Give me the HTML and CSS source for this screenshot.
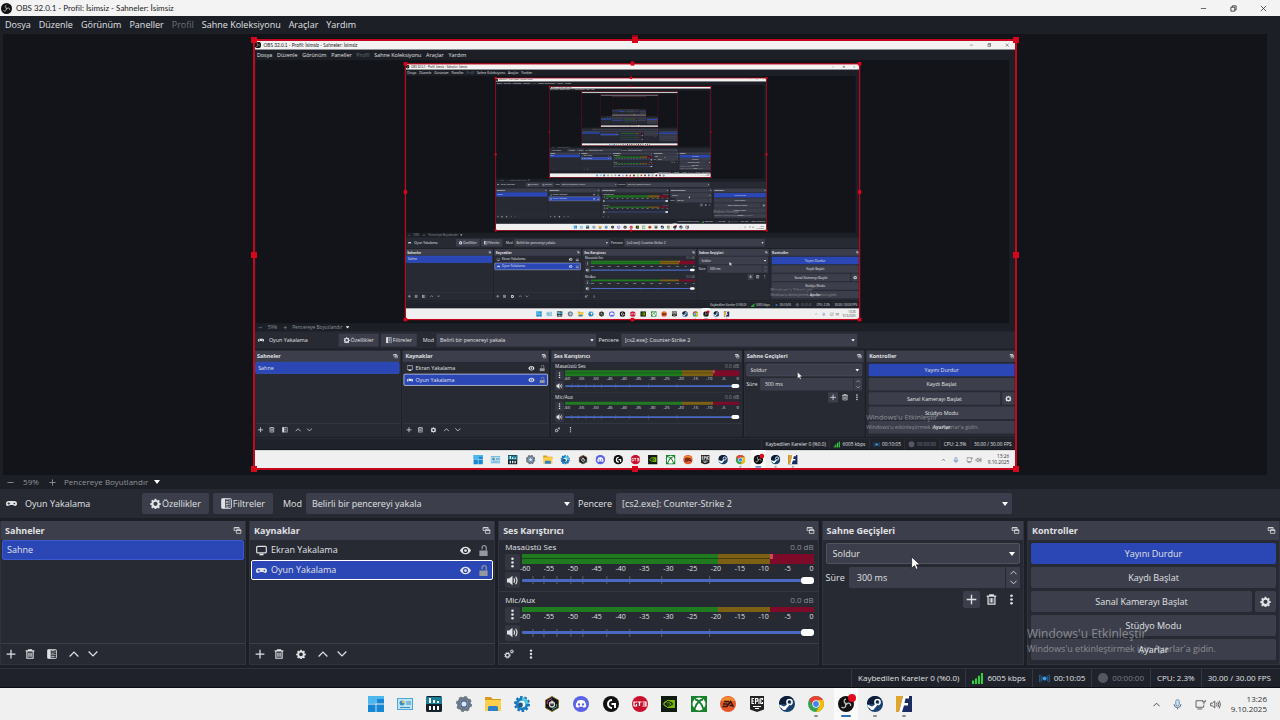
FILE: index.html
```html
<!DOCTYPE html>
<html lang="tr">
<head>
    <meta charset="UTF-8">
    <meta name="viewport" content="width=device-width, initial-scale=1.0">
    <title>OBS 32.0.1 - Profil: İsimsiz - Sahneler: İsimsiz</title>
    <link rel="stylesheet" href="styles.css">
</head>
<body>
    <!-- Icon sprite -->
    <svg class="sprite" aria-hidden="true">
        <symbol id="i-obs" viewBox="0 0 16 16"><circle cx="8" cy="8" r="8" fill="#111"/><path d="M8 7.500C5.500 7 5.500 3.500 8 3M8.600 8.200c2-2.200 4.600-.6 4 1.800M7.600 8.800C8.200 11.200 5.500 12.800 3.500 11" fill="none" stroke="#bbb" stroke-width="1.300"/><circle cx="8" cy="8" r="1.200" fill="#bbb"/></symbol>
        <symbol id="i-gear" viewBox="0 0 16 16"><path fill="currentColor" fill-rule="evenodd" d="M6.800 1h2.400l.4 1.900 1.300.6 1.700-1 1.700 1.700-1 1.700.5 1.200 1.900.5v2.300l-1.900.5-.5 1.300 1 1.700-1.700 1.700-1.700-1-1.300.5-.4 1.900H6.800l-.4-1.900-1.300-.5-1.700 1-1.700-1.700 1-1.700-.5-1.300L.3 9.900V7.600l1.900-.5.5-1.200-1-1.700 1.700-1.700 1.700 1 1.300-.6zM8 5.500a3 3 0 1 0 0 6 3 3 0 0 0 0-6z"/></symbol>
        <symbol id="i-gears" viewBox="0 0 16 16"><circle cx="5.500" cy="10" r="3" fill="none" stroke="currentColor" stroke-width="2"/><circle cx="5.500" cy="10" r="4.500" fill="none" stroke="currentColor" stroke-width="1.500" stroke-dasharray="1.800 1.730"/><circle cx="12.500" cy="4" r="1.800" fill="none" stroke="currentColor" stroke-width="1.600"/><circle cx="12.500" cy="4" r="2.900" fill="none" stroke="currentColor" stroke-dasharray="1.500 1.500"/></symbol>
        <symbol id="i-filter" viewBox="0 0 16 16"><rect x="1" y="1" width="14" height="14" rx="1" fill="none" stroke="currentColor" stroke-width="1.400"/><path fill="currentColor" d="M1 1h5v14H1z"/><path stroke="currentColor" stroke-dasharray="1 1.300" stroke-width="4" d="M9 2v12"/><path stroke="currentColor" stroke-dasharray="1 2" stroke-width="2" d="M12.500 2.500v12"/></symbol>
        <symbol id="i-pad" viewBox="0 0 16 16"><path fill="currentColor" fill-rule="evenodd" d="M4 4.500h8a4 4 0 0 1 4 4c0 2-1 3-2.400 3S11 10 10 10H6c-1 0-1.600 1.500-3.600 1.500S0 10.500 0 8.500a4 4 0 0 1 4-4zM3.500 6v1.300H2.200v1.200h1.300v1.300h1.200V8.500H6V7.300H4.700V6zm8.700.8a1.200 1.200 0 1 0 0 2.400 1.200 1.200 0 0 0 0-2.400z"/></symbol>
        <symbol id="i-screen" viewBox="0 0 16 16"><rect x="1" y="2" width="14" height="9.500" rx="1.500" fill="none" stroke="currentColor" stroke-width="1.700"/><path fill="currentColor" d="M5 12.500h6V15H5z"/></symbol>
        <symbol id="i-eye" viewBox="0 0 16 16"><path fill="currentColor" fill-rule="evenodd" d="M8 2.500c4 0 7 3 8 5.500-1 2.500-4 5.500-8 5.500S1 10.500 0 8c1-2.500 4-5.500 8-5.500zM8 4.300a3.700 3.700 0 1 0 0 7.400 3.700 3.700 0 0 0 0-7.400z"/><circle cx="8" cy="8" r="2" fill="currentColor"/></symbol>
        <symbol id="i-unlock" viewBox="0 0 16 16"><path fill="currentColor" d="M2 8h12v8H2z"/><path fill="none" stroke="currentColor" stroke-width="1.800" d="M12 8V4a3 3 0 0 0-6 0v2"/></symbol>
        <symbol id="i-plus" viewBox="0 0 16 16"><path stroke="currentColor" stroke-width="2" d="M8 1v14M1 8h14"/></symbol>
        <symbol id="i-minus" viewBox="0 0 16 16"><path stroke="currentColor" stroke-width="2" d="M1 8h14"/></symbol>
        <symbol id="i-trash" viewBox="0 0 16 16"><path fill="none" stroke="currentColor" stroke-width="1.800" d="M1 3h14M5.500 3V1.200h5V3M3 3v11.800h10V3"/><path stroke="currentColor" stroke-width="1.400" d="M6 6v6.500M8 6v6.500M10 6v6.500"/></symbol>
        <symbol id="i-up" viewBox="0 0 16 16"><path fill="none" stroke="currentColor" stroke-width="2" d="M1 12l7-7 7 7"/></symbol>
        <symbol id="i-down" viewBox="0 0 16 16"><path fill="none" stroke="currentColor" stroke-width="2" d="M1 4l7 7 7-7"/></symbol>
        <symbol id="i-dots" viewBox="0 0 16 16"><circle cx="8" cy="2.500" r="1.900" fill="currentColor"/><circle cx="8" cy="8" r="1.900" fill="currentColor"/><circle cx="8" cy="13.500" r="1.900" fill="currentColor"/></symbol>
        <symbol id="i-popout" viewBox="0 0 16 16"><path fill="none" stroke="currentColor" stroke-width="1.400" d="M5 8H2V3h9v2M6 7h8v6H6z"/><path fill="currentColor" d="M6 6h8v2.500H6zM2 2h9v2H2z"/></symbol>
        <symbol id="i-speaker" viewBox="0 0 16 16"><path fill="currentColor" d="M0 5h3l5-4v14l-5-4H0z"/><path fill="none" stroke="currentColor" stroke-width="1.700" d="M10 5q2 3 0 6M12.500 2.500q4 5.500 0 11"/></symbol>
        <symbol id="i-min" viewBox="0 0 16 16"><path stroke="currentColor" stroke-width="1.500" d="M2 8h12"/></symbol>
        <symbol id="i-restore" viewBox="0 0 16 16"><path fill="none" stroke="currentColor" stroke-width="1.800" d="M2 5h9v9H2zM5 5V2h9v9h-3"/></symbol>
        <symbol id="i-close" viewBox="0 0 16 16"><path stroke="currentColor" stroke-width="1.600" d="M2 2l12 12M14 2L2 14"/></symbol>
        <symbol id="i-bars" viewBox="0 0 16 16"><path fill="#2fd03c" d="M0 11h3v5H0zM4.300 8h3v8h-3zM8.600 4h3v12h-3zM13 0h3v16h-3z"/></symbol>
        <symbol id="i-stream" viewBox="0 0 16 16"><circle cx="8" cy="8" r="3" fill="#3b9be8"/><path fill="none" stroke="#2a5f8c" stroke-width="1.800" d="M4.500 4q-3 4 0 8M11.500 4q3 4 0 8M2 2.500q-3.500 5.500 0 11M14 2.500q3.500 5.500 0 11"/></symbol>
        <symbol id="i-mic" viewBox="0 0 16 16"><rect x="5.500" y="1" width="5" height="9" rx="2.500" fill="#d5e6f4" stroke="#5b84a8" stroke-width="1.300"/><path fill="none" stroke="#44617c" stroke-width="1.300" d="M3 7.500a5 5 0 0 0 10 0M8 12.500V15"/></symbol>
        <symbol id="i-net" viewBox="0 0 16 16"><path fill="none" stroke="#555" stroke-width="1.300" d="M10 2.500H1.500v9.500h11V9M3.500 14.500h7M13 8V4M11 1.500v2.500h4V1.500"/></symbol>
        <symbol id="i-vol" viewBox="0 0 16 16"><path fill="none" stroke="#444" stroke-width="1.200" d="M1 6h2.500L7 3v10l-3.500-3H1zM9.500 5.500q1.500 2.500 0 5M11.500 4q2.500 4 0 8M13.500 2.500q3.500 5.500 0 11"/></symbol>

        <!-- Taskbar applications -->
        <symbol id="a-start" viewBox="0 0 16 16"><path fill="#1687d4" d="M0 0h7.600v7.600H0zM8.400 0H16v7.600H8.400zM0 8.400h7.600V16H0zM8.400 8.400H16V16H8.400z"/><path fill="#49b8ee" d="M0 0h7.600v7.600H0zM8.400 0H16v3H8.400z"/></symbol>
        <symbol id="a-panel" viewBox="0 0 16 16"><rect y="2" width="16" height="12" fill="#4aa7d6"/><rect x="1" y="3" width="14" height="10" fill="#bfe5f5"/><circle cx="5" cy="7" r="2.500" fill="#3b8dc2"/><path fill="#f0b84a" d="M5 7V4.500A2.500 2.500 0 0 1 7.500 7z"/><path stroke="#3b8dc2" d="M9 6h5M9 8h5M3 11.500h10"/></symbol>
        <symbol id="a-mixer" viewBox="0 0 16 16"><rect width="16" height="16" rx="1.500" fill="#14232b"/><path fill="#1b7d95" d="M0 1h16v7H0z"/><path stroke="#fff" stroke-width="2" d="M4 2v5M8 4v3M12 5v2M4 10v4M8 10v4M12 10v4"/></symbol>
        <symbol id="a-discord" viewBox="0 0 16 16"><circle cx="8" cy="8" r="8" fill="#5a62e8"/><path fill="#fff" fill-rule="evenodd" d="M4.500 4.800q3.500-1.500 7 0 2 3 1.700 6-1.500 1-2.700 1l-.6-1.200q-2 .5-3.800 0l-.6 1.200q-1.200 0-2.700-1-.3-3 1.700-6zM6 7.200a1.200 1.200 0 1 0 0 2.400 1.200 1.200 0 0 0 0-2.400zm4 0a1.200 1.200 0 1 0 0 2.400 1.200 1.200 0 0 0 0-2.400z"/></symbol>
        <symbol id="a-folder" viewBox="0 0 16 16"><path fill="#d99a1b" d="M0 1h6l1.500 2H16v4H0z"/><path fill="#fbcf4b" d="M0 4h16v11H0z"/><path fill="#2e7fc9" d="M3 11.500Q3 10 4.500 10h7q1.500 0 1.500 1.500V15H3z"/></symbol>
        <symbol id="a-settings" viewBox="0 0 16 16"><circle cx="8" cy="8" r="5.500" fill="none" stroke="#6d7884" stroke-width="3"/><circle cx="8" cy="8" r="7" fill="none" stroke="#6d7884" stroke-width="2" stroke-dasharray="3 2.500"/><circle cx="8" cy="8" r="3.200" fill="#dce9f5" stroke="#3c6593" stroke-width="1.400"/></symbol>
        <symbol id="a-cog" viewBox="0 0 16 16"><circle cx="8" cy="8" r="5" fill="#e9f6fb" stroke="#1581c5" stroke-width="3"/><circle cx="8" cy="8" r="7" fill="none" stroke="#1a6fb4" stroke-width="2" stroke-dasharray="2.500 1.900"/><path fill="none" stroke="#4fc8e6" stroke-width="3" d="M8 3a5 5 0 0 1 5 5"/><circle cx="6.500" cy="9" r="2.400" fill="#24517f"/></symbol>
        <symbol id="a-hex" viewBox="0 0 16 16"><path fill="#151515" stroke="#7d6a28" d="M8 .5l6.500 3.700v7.600L8 15.500l-6.500-3.700V4.200z"/><path fill="none" stroke="#b243a5" d="M8 2.500l-4.700 2.700V8"/><path fill="none" stroke="#37a7a0" d="M12.700 8v2.800L8 13.500"/><circle cx="8" cy="8.500" r="2.500" fill="none" stroke="#ddd" stroke-width="1.300"/><path stroke="#ddd" stroke-width="1.300" d="M8 4.500v4"/></symbol>
        <symbol id="a-logi" viewBox="0 0 16 16"><circle cx="8" cy="8" r="8" fill="#111"/><path fill="none" stroke="#fff" stroke-width="2" d="M9 4a4 4 0 1 0 0 8M8.500 8H12v4"/></symbol>
        <symbol id="a-gt" viewBox="0 0 16 16"><circle cx="8" cy="8" r="8" fill="#c8102e"/><path fill="none" stroke="#fff" stroke-width="1.200" d="M5 6H2v4h2.500V8M5.500 6h4M7.500 6v4M10.500 6H14v4h-3.500M11 8h3"/></symbol>
        <symbol id="a-nvidia" viewBox="0 0 16 16"><path fill="#101a10" d="M0 0h16v16H0z"/><path fill="#77b900" d="M6 4h8v8H6z"/><path fill="none" stroke="#77b900" stroke-width="1.200" d="M2.500 8Q5 4.500 9 5M2.500 8Q5 11.500 9 11"/><path fill="none" stroke="#101a10" stroke-width="1.200" d="M6 5.500q4 0 5.500 2.500-2 2.500-5.500 2.500M6 7q2 0 2.500 1.200-1 1-2.500 1"/></symbol>
        <symbol id="a-xbox" viewBox="0 0 16 16"><path fill="#16802b" d="M0 0h16v16H0z"/><circle cx="8" cy="8" r="6.500" fill="#fff"/><path fill="none" stroke="#16802b" stroke-width="1.800" d="M3.500 13Q5 8 8 5.500 11 8 12.500 13M4 3.500q2 0 4 2 2-2 4-2"/></symbol>
        <symbol id="a-ea" viewBox="0 0 16 16"><circle cx="8" cy="8" r="8" fill="#e4572a"/><path fill="#f18a2c" d="M1 5a8 8 0 0 1 14 0z"/><path fill="none" stroke="#35160e" stroke-width="1.500" d="M4 5.500h5M3 8h4.500M2.500 10.500H7l3.500-5 3 5.500M9.500 9.500H12"/></symbol>
        <symbol id="a-epic" viewBox="0 0 16 16"><path fill="#222" d="M1 0h14v13.500L8 16l-7-2.500z"/><path fill="none" stroke="#fff" stroke-width="1.100" d="M5 2.500H3v5h2M3 5h1.800M6.500 8V2.500h1.800v2.700H6.500M10 2.500V8M13.500 4V2.500h-1.700v5h1.700V6M4 10.500h8M6 12.500h4"/></symbol>
        <symbol id="a-steam" viewBox="0 0 16 16"><circle cx="8" cy="8" r="8" fill="#17406f"/><path fill="#0d1c38" d="M0 8a8 8 0 0 1 14-5.200L8 8z"/><circle cx="10.500" cy="6" r="2.600" fill="none" stroke="#fff" stroke-width="1.500"/><path fill="#fff" d="M.2 8.500l5 2L8.500 8l1.500 1.500-2.500 3a2.400 2.400 0 0 1-4.500 0L.8 11z"/></symbol>
        <symbol id="a-chrome" viewBox="0 0 16 16"><circle cx="8" cy="8" r="8" fill="#34a353"/><path fill="#e94235" d="M1.100 4a8 8 0 0 1 13.800 0H8L5 9.500z"/><path fill="#fabb05" d="M14.900 4A8 8 0 0 1 8 16l3.500-6L10 4z"/><circle cx="8" cy="8" r="3.700" fill="#fff"/><circle cx="8" cy="8" r="2.900" fill="#4285f4"/></symbol>
        <symbol id="a-kick" viewBox="0 0 16 16"><path fill="#1b2c63" d="M0 0h16v16H0z"/><path fill="#e0a52b" d="M0 0h7L3 16H0z"/><path fill="#fff" d="M7 0h6v2.500H9.500L8.500 7H12v2.500H8L6 16H3z"/></symbol>
        <symbol id="a-pointer" viewBox="0 0 16 16"><path fill="#fff" stroke="#111" stroke-width=".8" d="M3 1v13l3.200-3 2 4.300 2.200-1-2-4.200h4.300z"/></symbol>
    </svg>

    <div class="screen">
        <header class="titlebar">
            <svg class="icon"><use href="#i-obs"/></svg>
            <span class="window-title">OBS 32.0.1 - Profil: İsimsiz - Sahneler: İsimsiz</span>
            <div class="window-buttons">
                <button aria-label="Simge durumuna küçült"><svg class="icon tiny"><use href="#i-min"/></svg></button>
                <button aria-label="Önceki boyut"><svg class="icon tiny"><use href="#i-restore"/></svg></button>
                <button aria-label="Kapat"><svg class="icon tiny"><use href="#i-close"/></svg></button>
            </div>
        </header>

        <nav class="menubar">
            <button>Dosya</button>
            <button>Düzenle</button>
            <button>Görünüm</button>
            <button>Paneller</button>
            <button disabled>Profil</button>
            <button>Sahne Koleksiyonu</button>
            <button>Araçlar</button>
            <button>Yardım</button>
        </nav>

        <main class="preview">
            <div class="capture">
                <div class="feed"></div>
                <i class="handle top left"></i>
                <i class="handle top center stem"></i>
                <i class="handle top right"></i>
                <i class="handle middle left"></i>
                <i class="handle middle right"></i>
                <i class="handle bottom left"></i>
                <i class="handle bottom center"></i>
                <i class="handle bottom right"></i>
            </div>
        </main>

        <div class="zoombar">
            <button aria-label="Uzaklaştır"><svg class="icon tiny"><use href="#i-minus"/></svg></button>
            <span class="zoom-level">59%</span>
            <button aria-label="Yakınlaştır"><svg class="icon tiny"><use href="#i-plus"/></svg></button>
            <span class="select fit">
                <select aria-label="Ölçekleme"><option>Pencereye Boyutlandır</option></select>
            </span>
        </div>

        <section class="contextbar">
            <div class="source-name"><svg class="icon"><use href="#i-pad"/></svg>Oyun Yakalama</div>
            <button class="btn"><svg class="icon"><use href="#i-gear"/></svg>Özellikler</button>
            <button class="btn"><svg class="icon"><use href="#i-filter"/></svg>Filtreler</button>
            <label class="field mode">Mod
                <span class="select"><select><option>Belirli bir pencereyi yakala</option></select></span>
            </label>
            <label class="field window">Pencere
                <span class="select"><select><option>[cs2.exe]: Counter-Strike 2</option></select></span>
            </label>
        </section>

        <div class="docks">
            <section class="dock scenes">
                <h2>Sahneler <svg class="icon small"><use href="#i-popout"/></svg></h2>
                <ul class="list">
                    <li class="selected">Sahne</li>
                </ul>
                <div class="toolbar">
                    <button aria-label="Sahne ekle"><svg class="icon"><use href="#i-plus"/></svg></button>
                    <button aria-label="Sahneyi kaldır"><svg class="icon"><use href="#i-trash"/></svg></button>
                    <button class="wide" aria-label="Sahne filtreleri"><svg class="icon small"><use href="#i-filter"/></svg></button>
                    <button aria-label="Yukarı taşı"><svg class="icon"><use href="#i-up"/></svg></button>
                    <button aria-label="Aşağı taşı"><svg class="icon"><use href="#i-down"/></svg></button>
                </div>
            </section>

            <section class="dock sources">
                <h2>Kaynaklar <svg class="icon small"><use href="#i-popout"/></svg></h2>
                <ul class="list">
                    <li>
                        <svg class="icon"><use href="#i-screen"/></svg><span class="name">Ekran Yakalama</span>
                        <button aria-label="Görünürlük"><svg class="icon"><use href="#i-eye"/></svg></button>
                        <button class="lock" aria-label="Kilit"><svg class="icon"><use href="#i-unlock"/></svg></button>
                    </li>
                    <li class="selected focused">
                        <svg class="icon"><use href="#i-pad"/></svg><span class="name">Oyun Yakalama</span>
                        <button aria-label="Görünürlük"><svg class="icon"><use href="#i-eye"/></svg></button>
                        <button class="lock" aria-label="Kilit"><svg class="icon"><use href="#i-unlock"/></svg></button>
                    </li>
                </ul>
                <div class="toolbar">
                    <button aria-label="Kaynak ekle"><svg class="icon"><use href="#i-plus"/></svg></button>
                    <button aria-label="Kaynağı kaldır"><svg class="icon"><use href="#i-trash"/></svg></button>
                    <button class="wide" aria-label="Kaynak özellikleri"><svg class="icon"><use href="#i-gear"/></svg></button>
                    <button aria-label="Yukarı taşı"><svg class="icon"><use href="#i-up"/></svg></button>
                    <button aria-label="Aşağı taşı"><svg class="icon"><use href="#i-down"/></svg></button>
                </div>
            </section>

            <section class="dock mixer">
                <h2>Ses Karıştırıcı <svg class="icon small"><use href="#i-popout"/></svg></h2>
                <div class="channel">
                    <div class="channel-head"><span>Masaüstü Ses</span><span class="db">0.0 dB</span></div>
                    <div class="channel-body">
                        <button class="square" aria-label="Kanal menüsü"><svg class="icon"><use href="#i-dots"/></svg></button>
                        <div class="levels">
                            <div class="meter stereo"><i class="peak"></i></div>
                            <div class="scale"><span>-60</span><span>-55</span><span>-50</span><span>-45</span><span>-40</span><span>-35</span><span>-30</span><span>-25</span><span>-20</span><span>-15</span><span>-10</span><span>-5</span><span>0</span></div>
                        </div>
                        <button class="square" aria-label="Sesi kapat"><svg class="icon"><use href="#i-speaker"/></svg></button>
                        <div class="fader">
                            <svg class="ticks" viewBox="0 0 292 8" preserveAspectRatio="none"><path d="M11 0v8M22 0v8M35 0v8M49 0v8M61 0v8M85 0v8M108 0v8M140 0v8M188 0v8"/></svg>
                            <input type="range" min="0" max="100" value="100" aria-label="Masaüstü Ses düzeyi">
                        </div>
                    </div>
                </div>
                <div class="channel">
                    <div class="channel-head"><span>Mic/Aux</span><span class="db">0.0 dB</span></div>
                    <div class="channel-body">
                        <button class="square" aria-label="Kanal menüsü"><svg class="icon"><use href="#i-dots"/></svg></button>
                        <div class="levels">
                            <div class="meter"></div>
                            <div class="scale"><span>-60</span><span>-55</span><span>-50</span><span>-45</span><span>-40</span><span>-35</span><span>-30</span><span>-25</span><span>-20</span><span>-15</span><span>-10</span><span>-5</span><span>0</span></div>
                        </div>
                        <button class="square" aria-label="Sesi kapat"><svg class="icon"><use href="#i-speaker"/></svg></button>
                        <div class="fader">
                            <svg class="ticks" viewBox="0 0 292 8" preserveAspectRatio="none"><path d="M11 0v8M22 0v8M35 0v8M49 0v8M61 0v8M85 0v8M108 0v8M140 0v8M188 0v8"/></svg>
                            <input type="range" min="0" max="100" value="100" aria-label="Mic/Aux düzeyi">
                        </div>
                    </div>
                </div>
                <div class="toolbar">
                    <button aria-label="Gelişmiş ses özellikleri"><svg class="icon"><use href="#i-gears"/></svg></button>
                    <button aria-label="Karıştırıcı menüsü"><svg class="icon"><use href="#i-dots"/></svg></button>
                </div>
            </section>

            <section class="dock transitions">
                <h2>Sahne Geçişleri <svg class="icon small"><use href="#i-popout"/></svg></h2>
                <div class="panel">
                    <span class="select outlined"><select aria-label="Geçiş"><option>Soldur</option></select></span>
                    <div class="duration">
                        <label class="field">Süre <input type="text" value="300 ms"></label>
                        <span class="steps">
                            <button aria-label="Artır"><svg class="icon tiny"><use href="#i-up"/></svg></button>
                            <button aria-label="Azalt"><svg class="icon tiny"><use href="#i-down"/></svg></button>
                        </span>
                    </div>
                    <div class="actions">
                        <button class="raised" aria-label="Geçiş ekle"><svg class="icon"><use href="#i-plus"/></svg></button>
                        <button aria-label="Geçişi kaldır"><svg class="icon"><use href="#i-trash"/></svg></button>
                        <button aria-label="Geçiş menüsü"><svg class="icon"><use href="#i-dots"/></svg></button>
                    </div>
                </div>
            </section>

            <section class="dock controls">
                <h2>Kontroller <svg class="icon small"><use href="#i-popout"/></svg></h2>
                <div class="panel">
                    <button class="btn primary">Yayını Durdur</button>
                    <button class="btn">Kaydı Başlat</button>
                    <div class="pair">
                        <button class="btn">Sanal Kamerayı Başlat</button>
                        <button class="btn" aria-label="Sanal kamera ayarları"><svg class="icon"><use href="#i-gear"/></svg></button>
                    </div>
                    <button class="btn">Stüdyo Modu</button>
                    <button class="btn">Ayarlar</button>
                </div>
            </section>
        </div>

        <footer class="statusbar">
            <span>Kaybedilen Kareler 0 (%0.0)</span>
            <span><svg class="icon"><use href="#i-bars"/></svg>6005 kbps</span>
            <span><svg class="icon"><use href="#i-stream"/></svg>00:10:05</span>
            <span class="off"><i class="dot"></i>00:00:00</span>
            <span>CPU: 2.3%</span>
            <span>30.00 / 30.00 FPS</span>
        </footer>

        <div class="taskbar">
            <div class="apps">
                <button aria-label="Başlat"><svg><use href="#a-start"/></svg></button>
                <button aria-label="Denetim Masası"><svg><use href="#a-panel"/></svg></button>
                <button aria-label="Mixer"><svg><use href="#a-mixer"/></svg></button>
                <button aria-label="Ayarlar"><svg><use href="#a-settings"/></svg></button>
                <button aria-label="Dosya Gezgini"><svg><use href="#a-folder"/></svg></button>
                <button aria-label="Araçlar"><svg><use href="#a-cog"/></svg></button>
                <button aria-label="Güç"><svg><use href="#a-hex"/></svg></button>
                <button aria-label="Discord"><svg><use href="#a-discord"/></svg></button>
                <button aria-label="Logitech G HUB"><svg><use href="#a-logi"/></svg></button>
                <button aria-label="GT3"><svg><use href="#a-gt"/></svg></button>
                <button aria-label="NVIDIA"><svg><use href="#a-nvidia"/></svg></button>
                <button aria-label="Xbox"><svg><use href="#a-xbox"/></svg></button>
                <button aria-label="EA"><svg><use href="#a-ea"/></svg></button>
                <button aria-label="Epic Games"><svg><use href="#a-epic"/></svg></button>
                <button aria-label="Steam"><svg><use href="#a-steam"/></svg></button>
                <button class="open" aria-label="Chrome"><svg><use href="#a-chrome"/></svg></button>
                <button class="open active" aria-label="OBS"><svg><use href="#i-obs"/></svg></button>
                <button class="open" aria-label="Steam penceresi"><svg><use href="#a-steam"/></svg></button>
                <button class="open" aria-label="Oyun"><svg><use href="#a-kick"/></svg></button>
            </div>
            <div class="tray">
                <button aria-label="Gizli simgeler"><svg class="icon tiny"><use href="#i-up"/></svg></button>
                <svg class="icon"><use href="#i-mic"/></svg>
                <span class="tray-group"><svg class="icon"><use href="#i-net"/></svg><svg class="icon"><use href="#i-vol"/></svg></span>
                <div class="clock"><span>13:26</span><span>9.10.2025</span></div>
            </div>
        </div>

        <div class="watermark">
            <p class="headline">Windows'u Etkinleştir</p>
            <p>Windows'u etkinleştirmek için Ayarlar'a gidin.</p>
        </div>
        <svg class="pointer"><use href="#a-pointer"/></svg>
    </div>

    <script src="app.js"></script>
</body>
</html>
```

FILE: styles.css
```css
* {
    box-sizing: border-box;
}
body {
    margin: 0;
    height: 100vh;
    overflow: hidden;
    background: #1c1f26;
    color: #e0e1e4;
    font-family: "Open Sans", "Noto Sans", sans-serif;
    font-size: 9px;
    line-height: 14px;
}
button, input, select {
    font: inherit;
    color: inherit;
    margin: 0;
    padding: 0;
    border: none;
    background: none;
}
button {
    display: flex;
    align-items: center;
    justify-content: center;
}
ul, h2, p {
    margin: 0;
    padding: 0;
}
.sprite {
    display: none;
}
.icon {
    display: block;
    flex: none;
    width: 11px;
    height: 11px;
}
.icon.small {
    width: 9px;
    height: 9px;
}
.icon.tiny {
    width: 7px;
    height: 7px;
}

/* Whole desktop, also used for the nested captures */
.screen {
    position: relative;
    display: flex;
    flex-direction: column;
    width: 100%;
    height: 100%;
    overflow: hidden;
    background: #1c1f26;
}

.titlebar {
    display: flex;
    align-items: center;
    gap: 4px;
    height: 16px;
    padding-left: 1px;
    background: #f3f3f3;
    color: #222;
    font-family: Lato, "Open Sans", sans-serif;
    font-size: 8px;
}
.window-buttons {
    display: flex;
    margin-left: auto;
    padding-right: 2px;
}
.window-buttons button {
    width: 30px;
    height: 14px;
}

.menubar {
    display: flex;
    gap: 8px;
    height: 18px;
    padding: 0 5px;
}
.menubar button:disabled {
    color: #6c6f76;
}

.preview {
    flex: 1;
    display: flex;
    justify-content: center;
    min-height: 0;
    margin: 0 13px 0 3px;
    padding: 6px 0;
    background: #131419;
}
.capture {
    position: relative;
    height: 100%;
    aspect-ratio: 16 / 9;
    background: #131419;
}
.feed {
    position: relative;
    width: 100%;
    height: 100%;
    overflow: hidden;
}
.feed .screen {
    position: absolute;
    transform-origin: 0 0;
}
.capture::after {
    content: "";
    position: absolute;
    inset: -1px;
    border: 2px solid #c4061f;
}
.handle {
    position: absolute;
    z-index: 1;
    width: 6px;
    height: 6px;
    margin: -3px;
    background: #d8061c;
}
.top { top: 0; }
.middle { top: 50%; }
.bottom { top: 100%; }
.left { left: 0; }
.center { left: 50%; }
.right { left: 100%; }
.stem {
    box-shadow: 0 -2px #8a0a1a;
}

.zoombar {
    display: flex;
    align-items: center;
    height: 14px;
    padding-left: 3px;
    color: #92959c;
    font-size: 8px;
}
.zoombar button {
    width: 14px;
    height: 14px;
}
.zoom-level {
    width: 28px;
    text-align: center;
}

.select {
    position: relative;
    display: block;
    flex: 1;
    height: 21px;
    border-radius: 2px;
    background: #3c3f4b;
}
.select select {
    display: block;
    width: 100%;
    height: 100%;
    padding-left: 6px;
    appearance: none;
    outline: none;
}
.select::after {
    content: "";
    position: absolute;
    top: 50%;
    right: 4px;
    margin-top: -2px;
    border: 3px solid transparent;
    border-top: 4px solid #fff;
    border-bottom: none;
}
.select.fit {
    flex: none;
    width: 105px;
    height: 14px;
    background: none;
}
.select.fit select {
    padding-left: 5px;
}
.select.outlined {
    flex: none;
    border: 1px solid #50535f;
}

.contextbar {
    display: flex;
    align-items: center;
    gap: 4px;
    height: 29px;
    padding: 0 268px 0 6px;
    background: #272a33;
}
.source-name {
    display: flex;
    align-items: center;
    gap: 8px;
    width: 132px;
}
.btn {
    gap: 1px;
    height: 21px;
    padding: 0 8px;
    border-radius: 2px;
    background: #3c3f4b;
}
.btn.primary {
    background: #2a47b5;
}
.field {
    display: flex;
    align-items: center;
    gap: 4px;
}
.field.mode {
    flex: 295 1 0;
    padding-left: 6px;
}
.field.window {
    flex: 440 1 0;
}

.docks {
    display: flex;
    gap: 3px;
    padding: 3px 0;
}
.dock {
    display: flex;
    flex-direction: column;
    min-width: 0;
    height: 144px;
    border: 1px solid #30333d;
    border-top: none;
    background: #272a33;
}
.scenes, .sources { flex: 246 1 0; }
.mixer { flex: 321 1 0; }
.transitions { flex: 202 1 0; }
.controls { flex: 253 1 0; }

.dock h2 {
    display: flex;
    align-items: center;
    justify-content: space-between;
    height: 19px;
    padding: 0 3px 0 4px;
    background: #3c3f4b;
    font-size: 9px;
    font-weight: 700;
    line-height: 14px;
}

.list {
    flex: 1;
    list-style: none;
    padding: 0 1px;
}
.list li {
    display: flex;
    align-items: center;
    gap: 4px;
    height: 20px;
    padding: 0 2px 0 4px;
    border: 1px solid transparent;
    border-radius: 2px;
}
.list li.selected {
    background: #2a47b5;
    border-color: #3a5bd0;
}
.list li.focused {
    border-color: #fff;
}
.list .name {
    flex: 1;
}
.list button {
    width: 14px;
}
.list .lock {
    color: #96989e;
}

.toolbar {
    display: flex;
    align-items: center;
    gap: 5px;
    height: 21px;
    padding-left: 3px;
    border-top: 1px solid #3c3f4b;
}
.toolbar button {
    width: 14px;
    height: 14px;
}
.toolbar .icon {
    width: 10px;
    height: 10px;
}
.toolbar .wide {
    width: 20px;
}
.mixer .toolbar {
    gap: 8px;
}

.channel {
    flex: 1;
    padding: 0 4px 0 6px;
}
.channel + .channel {
    padding-top: 1px;
    border-top: 1px solid #343740;
}
.channel-head {
    display: flex;
    justify-content: space-between;
    height: 14px;
    font-size: 8px;
}
.channel-head .db {
    color: #8b8e96;
}
.channel-body {
    display: grid;
    grid-template-columns: 15px 1fr;
    column-gap: 2px;
    row-gap: 2px;
}
.square {
    height: 16px;
    border-radius: 2px;
    background: #343741;
}
.levels {
    min-width: 0;
    height: 16px;
}
.meter {
    position: relative;
    height: 5px;
    background: linear-gradient(to right, #1f7a20 67%, #7c6114 67% 85%, #7c0a28 85%);
}
.meter.stereo {
    height: 10px;
}
.meter.stereo::after {
    content: "";
    position: absolute;
    top: 4px;
    left: 0;
    right: 15%;
    height: 1px;
    background: rgba(0, 0, 0, 0.4);
}
.peak {
    position: absolute;
    left: 85%;
    width: 3px;
    height: 5px;
    background: #c84a5c;
}
.scale {
    display: flex;
    justify-content: space-between;
    margin: 0 -5px 0 -4px;
    font-size: 7px;
    line-height: 9px;
}
.scale span {
    width: 14px;
    text-align: center;
}
.fader {
    position: relative;
    display: flex;
    align-items: center;
    height: 16px;
}
.ticks {
    position: absolute;
    top: 4px;
    left: 0;
    width: 100%;
    height: 8px;
    fill: none;
    stroke: #5c606c;
}
.fader input {
    position: relative;
    width: 100%;
    height: 14px;
    appearance: none;
}
.fader input::-webkit-slider-runnable-track {
    height: 3px;
    border-radius: 1px;
    background: #4a68c4;
}
.fader input::-webkit-slider-thumb {
    appearance: none;
    width: 13px;
    height: 7px;
    margin-top: -2px;
    border-radius: 3px;
    background: #fff;
}

.panel {
    display: flex;
    flex-direction: column;
    gap: 3px;
    padding: 3px;
}
.panel .btn {
    flex: none;
}
.pair {
    display: flex;
    gap: 3px;
}
.pair .btn:first-child {
    flex: 1;
}
.pair .btn:last-child {
    width: 21px;
    padding: 0;
}
.duration {
    display: flex;
}
.duration .field {
    flex: 1;
}
.duration input {
    flex: 1;
    min-width: 0;
    width: 20px;
    height: 21px;
    padding-left: 8px;
    border-radius: 2px 0 0 2px;
    background: #3c3f4b;
}
.steps {
    display: flex;
    flex-direction: column;
    width: 15px;
    border-left: 1px solid #272a33;
    background: #3c3f4b;
}
.steps button {
    flex: 1;
}
.actions {
    display: flex;
    justify-content: flex-end;
    gap: 3px;
}
.actions button {
    width: 17px;
    height: 17px;
    border-radius: 2px;
}
.actions .raised {
    background: #3c3f4b;
}

.statusbar {
    display: flex;
    justify-content: flex-end;
    height: 20px;
    padding-right: 3px;
    border-top: 1px solid #30333d;
    border-bottom: 1px solid #0c0d10;
    background: #1f222a;
    font-size: 8px;
}
.statusbar span {
    display: flex;
    align-items: center;
    gap: 4px;
    padding: 0 6px;
    border-left: 1px solid #343741;
}
.statusbar .off {
    color: #7b7e85;
}
.dot {
    width: 10px;
    height: 10px;
    border-radius: 50%;
    background: #54575f;
}

.taskbar {
    display: grid;
    grid-template-columns: 1fr 545px 1fr;
    align-items: center;
    height: 32px;
    background: #f0f0f1;
    color: #333;
}
.apps {
    grid-column: 2;
    display: flex;
    justify-content: space-between;
}
.apps button {
    position: relative;
    width: 16px;
    height: 32px;
}
.apps svg {
    width: 16px;
    height: 16px;
}
.apps .open::after {
    content: "";
    position: absolute;
    bottom: 3px;
    left: 6px;
    width: 4px;
    height: 2px;
    border-radius: 1px;
    background: #8a8d92;
}
.apps .active {
    background: #fafafa;
    box-shadow: -4px 0 #fafafa, 4px 0 #fafafa;
}
.apps .active::after {
    left: 3px;
    width: 10px;
    background: #2a6fb8;
}
.apps .active::before {
    content: "";
    position: absolute;
    top: 6px;
    right: -2px;
    width: 8px;
    height: 8px;
    border-radius: 50%;
    background: #e00b1c;
}
.tray {
    display: flex;
    align-items: center;
    justify-content: flex-end;
    gap: 12px;
    padding-right: 13px;
}
.tray-group {
    display: flex;
    gap: 4px;
}
.clock {
    display: flex;
    flex-direction: column;
    align-items: flex-end;
    width: 34px;
    font-size: 8px;
    line-height: 10px;
}

/* On top of everything */
.watermark {
    position: absolute;
    right: 0;
    bottom: 64px;
    width: 253px;
    color: rgba(255, 255, 255, 0.4);
    pointer-events: none;
}
.watermark .headline {
    font-size: 12px;
    line-height: 16px;
}
.pointer {
    position: absolute;
    left: 71%;
    bottom: 150px;
    width: 14px;
    height: 14px;
    pointer-events: none;
}
```

FILE: app.js
```js
// The scene captures its own desktop, so the preview repeats the screen inside itself
const DEPTH = 7;
const TEXT_DEPTH = 4; // labels are under a pixel tall below this level
const root = document.querySelector('.screen');
const template = root.cloneNode(true);

function stripText(node) {
    const walker = document.createTreeWalker(node, NodeFilter.SHOW_TEXT);
    while (walker.nextNode()) {
        walker.currentNode.data = '';
    }
    node.querySelectorAll('input[type="text"]').forEach(input => {
        input.value = '';
    });
}

function renderFeed() {
    const width = root.offsetWidth;
    const height = root.offsetHeight;
    let parent = root;

    root.querySelector('.feed').innerHTML = '';
    root.querySelector('.capture').style.aspectRatio = width / height;
    const scale = root.querySelector('.capture').offsetWidth / width;

    for (let i = 0; i < DEPTH; i++) {
        const copy = template.cloneNode(true);
        if (i >= TEXT_DEPTH) {
            stripText(copy);
        }
        copy.inert = true;
        copy.setAttribute('aria-hidden', 'true');
        copy.style.width = width + 'px';
        copy.style.height = height + 'px';
        copy.style.transform = `scale(${scale})`;
        copy.querySelector('.capture').style.aspectRatio = width / height;
        parent.querySelector('.feed').appendChild(copy);
        parent = copy;
    }
}

renderFeed();
window.addEventListener('resize', renderFeed);
```
